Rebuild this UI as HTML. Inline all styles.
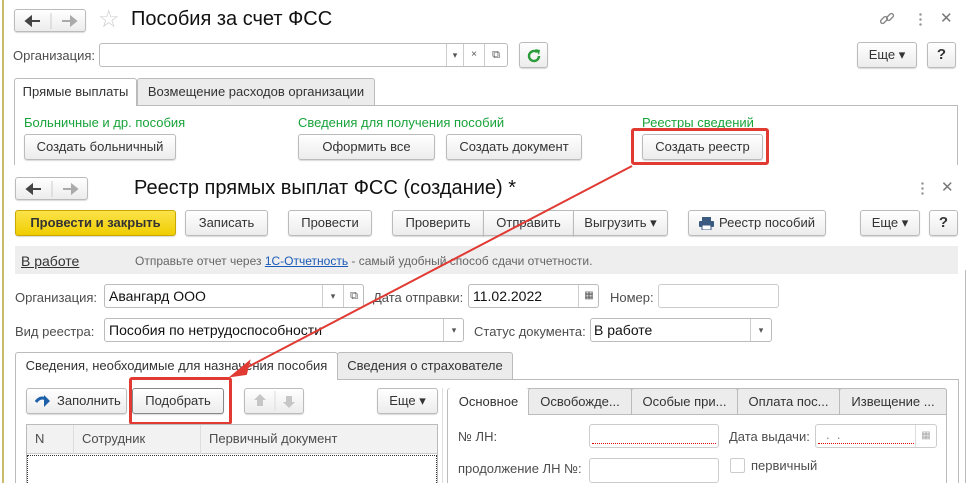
<!DOCTYPE html>
<html><head><meta charset="utf-8"><style>
*{box-sizing:border-box;margin:0;padding:0}
body{width:968px;height:483px;overflow:hidden;background:#fff;font-family:"Liberation Sans",Arial,sans-serif;font-size:13px;color:#333;position:relative}
.a{position:absolute;white-space:nowrap}
.btn{position:absolute;border:1px solid #bbb;border-radius:3px;background:linear-gradient(#fff,#ececec);box-shadow:0 1px 1px rgba(0,0,0,.15);text-align:center;color:#333;font-size:13px}
.inp{position:absolute;border:1px solid #bbb;border-radius:3px;background:#fff}
.seg{position:absolute;top:0;bottom:0;border-left:1px solid #ccc;text-align:center;font-size:9px;color:#555}
.lbl{position:absolute;color:#4d4d4d;font-size:13px;white-space:nowrap}
.grn{position:absolute;color:#19a33a;font-size:13px;white-space:nowrap}
.tab{position:absolute;border:1px solid #bbb;border-bottom:none;border-radius:3px 3px 0 0;background:#ececec;text-align:center;font-size:13px;color:#333;white-space:nowrap;overflow:hidden}
.tab.act{background:#fff}
</style></head><body>
<div class="a" style="left:2px;top:0;width:2px;height:483px;background:#c8bc6a"></div>

<!-- window 1 -->
<div class="btn" style="left:14px;top:9px;width:72px;height:23px"><svg class="a" style="left:0;top:0" width="72" height="22"><path d="M11 11h14M11 11l5-4v8z" stroke="#444" stroke-width="2" fill="#444"/><line x1="36" y1="3" x2="36" y2="19" stroke="#ccc"/><path d="M47 11h14M61 11l-5-4v8z" stroke="#aaa" stroke-width="2" fill="#aaa"/></svg></div>
<div class="a" style="left:98px;top:5px;font-size:24px;color:#ccc">☆</div>
<div class="a" style="left:131px;top:8px;font-size:20px;color:#111">Пособия за счет ФСС</div>
<svg class="a" style="left:878px;top:10px" width="18" height="18" viewBox="0 0 18 18"><g fill="none" stroke="#888" stroke-width="1.4"><rect x="2" y="8" width="8" height="4" rx="2" transform="rotate(-45 6 10)"/><rect x="8" y="5" width="8" height="4" rx="2" transform="rotate(-45 12 7)"/></g></svg>
<div class="a" style="left:919px;top:12px;width:3px;height:14px;background:radial-gradient(circle,#999 1px,transparent 1.5px) 0 0/3px 5px"></div>
<div class="a" style="left:940px;top:9px;font-size:15px;color:#777">✕</div>

<div class="lbl" style="left:13px;top:48px">Организация:</div>
<div class="inp" style="left:99px;top:43px;width:409px;height:24px">
 <div class="seg" style="left:346px;width:17px;line-height:22px">▾</div>
 <div class="seg" style="left:363px;width:21px;line-height:22px;font-size:10px">×</div>
 <div class="seg" style="left:384px;width:23px;line-height:22px;font-size:11px">⧉</div>
</div>
<div class="btn" style="left:519px;top:42px;width:29px;height:26px"><svg class="a" style="left:6px;top:5px" width="16" height="16"><path d="M13 8a5 5 0 1 1-2-4" fill="none" stroke="#2a9c3a" stroke-width="2.4"/><path d="M9 1l5 1-1 5z" fill="#2a9c3a"/></svg></div>
<div class="btn" style="left:857px;top:42px;width:60px;height:26px;line-height:24px">Еще ▾</div>
<div class="btn" style="left:927px;top:42px;width:29px;height:26px;line-height:24px;font-weight:bold;font-size:15px">?</div>

<div class="a" style="left:14px;top:105px;width:944px;height:60px;border:1px solid #bbb;border-bottom:none"></div>
<div class="tab act" style="left:14px;top:78px;width:123px;height:28px;line-height:26px">Прямые выплаты</div>
<div class="tab" style="left:137px;top:78px;width:238px;height:27px;line-height:26px">Возмещение расходов организации</div>
<div class="grn" style="left:24px;top:115px">Больничные и др. пособия</div>
<div class="grn" style="left:298px;top:115px">Сведения для получения пособий</div>
<div class="grn" style="left:642px;top:115px">Реестры сведений</div>
<div class="btn" style="left:24px;top:134px;width:152px;height:26px;line-height:24px">Создать больничный</div>
<div class="btn" style="left:298px;top:134px;width:137px;height:26px;line-height:24px">Оформить все</div>
<div class="btn" style="left:446px;top:134px;width:136px;height:26px;line-height:24px">Создать документ</div>
<div class="btn" style="left:642px;top:134px;width:121px;height:26px;line-height:24px">Создать реестр</div>
<div class="a" style="left:631px;top:128px;width:138px;height:37px;border:3px solid #e03a32;border-radius:3px"></div>

<!-- window 2 -->
<div class="a" style="left:4px;top:167px;width:964px;height:316px;background:#fff"></div>
<div class="btn" style="left:15px;top:177px;width:73px;height:23px"><svg class="a" style="left:0;top:0" width="72" height="22"><path d="M11 11h14M11 11l5-4v8z" stroke="#444" stroke-width="2" fill="#444"/><line x1="36" y1="3" x2="36" y2="19" stroke="#ccc"/><path d="M47 11h14M61 11l-5-4v8z" stroke="#aaa" stroke-width="2" fill="#aaa"/></svg></div>
<div class="a" style="left:134px;top:177px;font-size:20px;color:#111">Реестр прямых выплат ФСС (создание) *</div>
<div class="a" style="left:921px;top:181px;width:3px;height:14px;background:radial-gradient(circle,#999 1px,transparent 1.5px) 0 0/3px 5px"></div>
<div class="a" style="left:941px;top:178px;font-size:15px;color:#777">✕</div>

<div class="btn" style="left:15px;top:210px;width:161px;height:26px;line-height:24px;background:linear-gradient(#fbe34a,#f0cd00);border-color:#c9a800;font-weight:bold;color:#333">Провести и закрыть</div>
<div class="btn" style="left:185px;top:210px;width:83px;height:26px;line-height:24px">Записать</div>
<div class="btn" style="left:288px;top:210px;width:84px;height:26px;line-height:24px">Провести</div>
<div class="btn" style="left:392px;top:210px;width:92px;height:26px;line-height:24px;border-radius:3px 0 0 3px">Проверить</div>
<div class="btn" style="left:483px;top:210px;width:91px;height:26px;line-height:24px;border-radius:0">Отправить</div>
<div class="btn" style="left:573px;top:210px;width:95px;height:26px;line-height:24px;border-radius:0 3px 3px 0">Выгрузить ▾</div>
<div class="btn" style="left:688px;top:210px;width:138px;height:26px;line-height:24px;padding-left:20px"><svg class="a" style="left:10px;top:6px" width="15" height="13"><rect x="3" y="0" width="9" height="4" fill="#3b5a80"/><rect x="0" y="4" width="15" height="6" rx="1" fill="#3b5a80"/><rect x="3" y="8" width="9" height="5" fill="#fff" stroke="#3b5a80"/></svg>Реестр пособий</div>
<div class="btn" style="left:860px;top:210px;width:60px;height:26px;line-height:24px">Еще ▾</div>
<div class="btn" style="left:929px;top:210px;width:29px;height:26px;line-height:24px;font-weight:bold;font-size:15px">?</div>

<div class="a" style="left:15px;top:246px;width:943px;height:28px;background:#eee"></div>
<div class="a" style="left:21px;top:253px;font-size:14px;color:#333;text-decoration:underline">В работе</div>
<div class="a" style="left:135px;top:254px;font-size:12px;color:#666">Отправьте отчет через <span style="color:#1a5ab8;text-decoration:underline">1С-Отчетность</span> - самый удобный способ сдачи отчетности.</div>
<div class="a" style="left:965px;top:270px;width:1px;height:213px;background:#bbb"></div>

<div class="lbl" style="left:15px;top:290px">Организация:</div>
<div class="inp" style="left:104px;top:284px;width:260px;height:24px"><span class="a" style="left:4px;top:3px;font-size:14px;color:#111">Авангард ООО</span>
 <div class="seg" style="left:217px;width:21px;line-height:22px">▾</div><div class="seg" style="left:238px;width:21px;line-height:22px;font-size:11px">⧉</div></div>
<div class="lbl" style="left:373px;top:290px">Дата отправки:</div>
<div class="inp" style="left:468px;top:284px;width:131px;height:24px"><span class="a" style="left:4px;top:3px;font-size:14px;color:#111">11.02.2022</span><div class="seg" style="left:109px;width:21px;line-height:22px;font-size:10px">▦</div></div>
<div class="lbl" style="left:610px;top:290px">Номер:</div>
<div class="inp" style="left:658px;top:284px;width:121px;height:24px;border-color:#ccc"></div>

<div class="lbl" style="left:15px;top:324px">Вид реестра:</div>
<div class="inp" style="left:104px;top:318px;width:360px;height:24px"><span class="a" style="left:4px;top:3px;font-size:14px;color:#111">Пособия по нетрудоспособности</span><div class="seg" style="left:338px;width:21px;line-height:22px">▾</div></div>
<div class="lbl" style="left:474px;top:324px">Статус документа:</div>
<div class="inp" style="left:590px;top:318px;width:182px;height:24px"><span class="a" style="left:3px;top:3px;font-size:14px;color:#111">В работе</span><div class="seg" style="left:159px;width:21px;line-height:22px">▾</div></div>

<div class="a" style="left:15px;top:379px;width:944px;height:104px;border-top:1px solid #bbb;border-left:1px solid #bbb;border-right:1px solid #bbb"></div>
<div class="tab act" style="left:15px;top:352px;width:323px;height:28px;line-height:26px">Сведения, необходимые для назначения пособия</div>
<div class="tab" style="left:337px;top:352px;width:176px;height:27px;line-height:26px">Сведения о страхователе</div>

<div class="btn" style="left:26px;top:388px;width:101px;height:26px;line-height:24px;text-align:left;padding-left:30px"><svg class="a" style="left:8px;top:6px" width="16" height="13"><path d="M1 7q4-6 10-3" fill="none" stroke="#1d5fa8" stroke-width="3"/><path d="M9 0l6 6-6 6z" fill="#1d5fa8"/></svg>Заполнить</div>
<div class="btn" style="left:132px;top:388px;width:92px;height:26px;line-height:24px;border-color:#888">Подобрать</div>
<div class="btn" style="left:244px;top:388px;width:60px;height:26px"><svg class="a" style="left:0;top:0" width="60" height="24"><path d="M15 5l6 6h-3v6h-6v-6h-3z" fill="#c6c6c6"/><line x1="30" y1="2" x2="30" y2="22" stroke="#ddd"/><path d="M44 19l6-6h-3v-6h-6v6h-3z" fill="#c6c6c6"/></svg></div>
<div class="btn" style="left:377px;top:388px;width:61px;height:26px;line-height:24px">Еще ▾</div>
<div class="a" style="left:129px;top:377px;width:103px;height:48px;border:3px solid #e03a32;border-radius:3px"></div>

<div class="a" style="left:26px;top:424px;width:412px;height:59px;border:1px solid #bbb;border-bottom:none"></div>
<div class="a" style="left:27px;top:425px;width:410px;height:29px;background:#f2f2f2;border-bottom:1px solid #ccc"></div>
<div class="a" style="left:73px;top:425px;width:1px;height:29px;background:#ddd"></div>
<div class="a" style="left:200px;top:425px;width:1px;height:29px;background:#ddd"></div>
<div class="lbl" style="left:35px;top:431px">N</div>
<div class="lbl" style="left:82px;top:431px">Сотрудник</div>
<div class="lbl" style="left:209px;top:431px">Первичный документ</div>
<div class="a" style="left:27px;top:455px;width:410px;height:28px;border:1px dotted #333;border-bottom:none"></div>
<div class="a" style="left:442px;top:388px;width:1px;height:95px;background:#ddd"></div>

<div class="a" style="left:447px;top:388px;width:500px;height:95px;border:1px solid #bbb;border-bottom:none;border-radius:3px 3px 0 0"></div>
<div class="tab act" style="left:448px;top:388px;width:81px;height:27px;line-height:26px;border-color:transparent">Основное</div>
<div class="a" style="left:528px;top:414px;width:418px;height:1px;background:#bbb"></div>
<div class="tab" style="left:528px;top:388px;width:104px;height:26px;line-height:25px">Освобожде...</div>
<div class="tab" style="left:631px;top:388px;width:107px;height:26px;line-height:25px">Особые при...</div>
<div class="tab" style="left:737px;top:388px;width:103px;height:26px;line-height:25px">Оплата пос...</div>
<div class="tab" style="left:839px;top:388px;width:108px;height:26px;line-height:25px">Извещение ...</div>

<div class="lbl" style="left:458px;top:429px">№ ЛН:</div>
<div class="inp" style="left:589px;top:424px;width:130px;height:24px;border-color:#ccc"><div class="a" style="left:2px;right:2px;bottom:3px;border-bottom:1px dotted #d00"></div></div>
<div class="lbl" style="left:729px;top:429px">Дата выдачи:</div>
<div class="inp" style="left:815px;top:424px;width:122px;height:24px;border-color:#ccc"><span class="a" style="left:10px;top:2px;color:#888">.&nbsp;&nbsp;.</span><div class="a" style="left:2px;width:96px;bottom:3px;border-bottom:1px dotted #d00"></div><div class="seg" style="left:99px;width:21px;line-height:22px;font-size:10px;color:#aaa;border-color:#ddd">▦</div></div>
<div class="lbl" style="left:458px;top:461px">продолжение ЛН №:</div>
<div class="inp" style="left:589px;top:458px;width:130px;height:25px;border-color:#ccc"></div>
<div class="inp" style="left:730px;top:458px;width:15px;height:15px;border-color:#ccc;border-radius:2px"></div>
<div class="lbl" style="left:751px;top:458px">первичный</div>

<!-- arrow -->
<svg class="a" style="left:0;top:0" width="968" height="483"><line x1="632" y1="166" x2="244" y2="369" stroke="#e03a32" stroke-width="2"/><polygon points="232,376 249,362 246,374" fill="#e03a32" stroke="#e03a32" stroke-width="2"/></svg>
</body></html>
